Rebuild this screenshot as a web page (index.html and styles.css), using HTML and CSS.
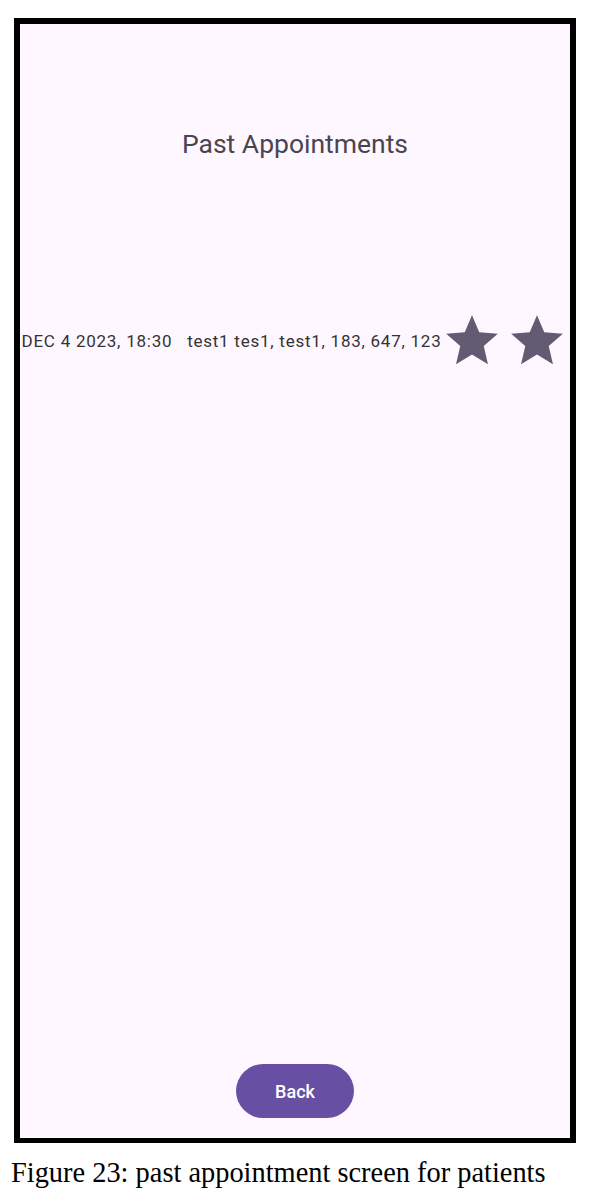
FILE: index.html
```html
<!DOCTYPE html>
<html>
<head>
<meta charset="utf-8">
<link rel="stylesheet" href="styles.css">
</head>
<body>
<div class="frame">
  <h1 class="title">Past Appointments</h1>
  <div class="row">
    <span class="row-text">DEC 4 2023, 18:30   test1 tes1, test1, 183, 647, 123</span>
    <span class="star"><svg viewBox="0 0 24 24" width="62" height="62"><path d="M12 17.27L18.18 21l-1.64-7.03L22 9.24l-7.19-.61L12 2 9.19 8.63 2 9.24l5.46 4.73L5.82 21z" fill="#625B71"/></svg></span>
    <span class="star"><svg viewBox="0 0 24 24" width="62" height="62"><path d="M12 17.27L18.18 21l-1.64-7.03L22 9.24l-7.19-.61L12 2 9.19 8.63 2 9.24l5.46 4.73L5.82 21z" fill="#625B71"/></svg></span>
  </div>
  <div class="spacer"></div>
  <button class="back">Back</button>
</div>
<p class="caption">Figure 23: past appointment screen for patients</p>
</body>
</html>
```
FILE: styles.css
```css
html, body {
  margin: 0;
  padding: 0;
  background: #ffffff;
}
.frame {
  box-sizing: border-box;
  margin: 18px 0 0 14px;
  width: 562px;
  height: 1125px;
  border: 6px solid #000;
  border-bottom-width: 5px;
  background: #FEF7FF;
  display: flex;
  flex-direction: column;
  align-items: center;
  font-family: Roboto, "Noto Sans", sans-serif;
}
.title {
  margin: 104px 0 0 0;
  font-size: 26.5px;
  font-weight: 400;
  line-height: 32px;
  color: #49454F;
}
.row {
  margin-top: 150px;
  display: flex;
  align-items: center;
  justify-content: center;
  width: 100%;
  white-space: pre;
}
.row-text {
  font-size: 17px;
  color: #333;
  letter-spacing: 0.75px;
}
.star {
  display: flex;
  width: 62px;
  height: 62px;
}
.star + .star {
  margin-left: 3px;
}
.spacer {
  flex: 1;
}
.back {
  margin-bottom: 20px;
  width: 118px;
  height: 54px;
  border: none;
  border-radius: 27px;
  background: #6750A4;
  color: #ffffff;
  font-family: Roboto, "Noto Sans", sans-serif;
  font-size: 18px;
  font-weight: 500;
}
.caption {
  margin: 14px 0 0 11px;
  font-family: "Liberation Serif", "Times New Roman", serif;
  font-size: 28.4px;
  line-height: 32px;
  color: #000;
}
```
